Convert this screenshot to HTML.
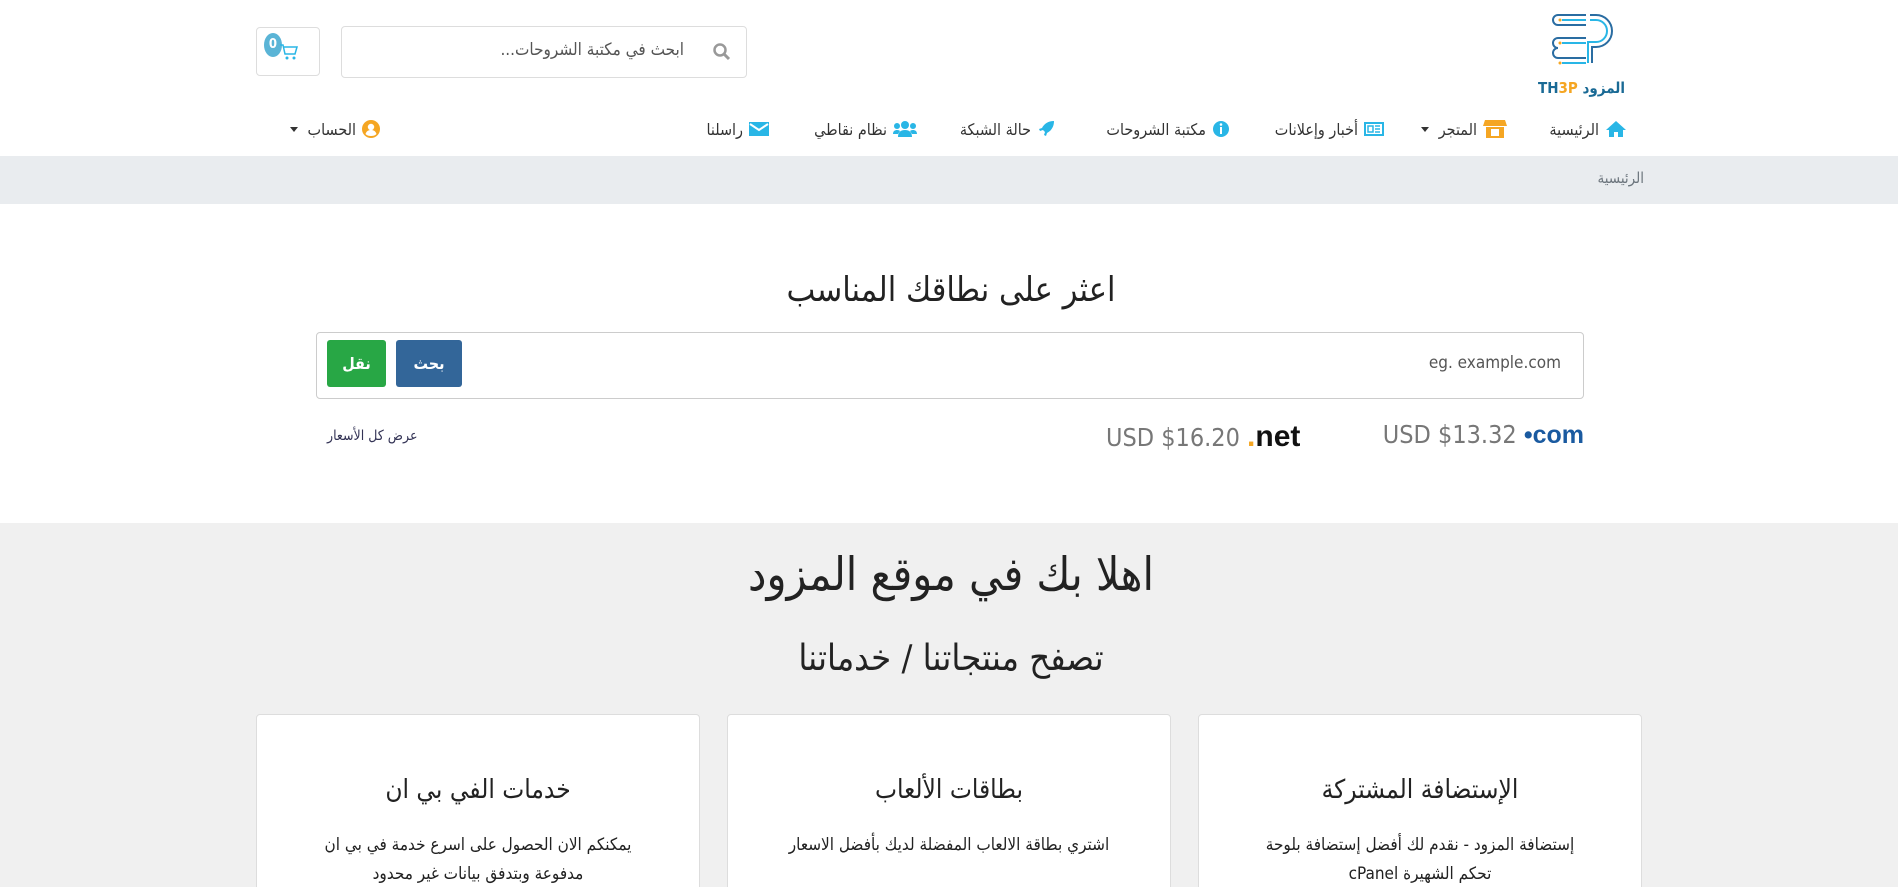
<!DOCTYPE html>
<html dir="rtl"><head><meta charset="utf-8"><style>
*{box-sizing:border-box;margin:0;padding:0}
html,body{width:1902px;height:887px;overflow:hidden}
body{background:#fff;font-family:"DejaVu Sans Condensed","DejaVu Sans",sans-serif;color:#333;position:relative}
.a{position:absolute}
.nav{top:116px;height:26px;font-size:16px;color:#333;display:flex;align-items:center;gap:6px;white-space:nowrap}
.caret{display:inline-block;border-left:4px solid transparent;border-right:4px solid transparent;border-top:5px solid #333;margin-right:4px}
.card{background:#fff;border:1px solid #ddd;border-radius:4px;top:714px;height:190px;width:444px;text-align:center;overflow:hidden}
.card h3{font-weight:normal;font-size:26px;margin-top:60px;color:#222}
.card p{font-size:17px;line-height:29px;margin:26px 60px 0;color:#222}
</style></head><body>
<div class="a" style="left:1546px;top:12px;width:80px;height:80px">
<svg width="80" height="60" viewBox="0 0 80 60" fill="none" stroke-width="2">
<path d="M40 3H12a5 5 0 0 0 0 10h28M40 26H12a5 5 0 0 0 0 10M12 36a5 5 0 0 0 0 10h28" stroke="#2a6da2"/>
<path d="M40 8H16M40 31H16M40 51H16" stroke="#29b6e6"/>
<path d="M44 3h6a16 16 0 0 1 0 32H46v16" stroke="#2a6da2"/>
<path d="M44 8h6a11 11 0 0 1 0 22H42v21" stroke="#29b6e6"/>
<circle cx="14" cy="8" r="1.5" fill="#f5a623" stroke="none"/><circle cx="14" cy="31" r="1.5" fill="#f5a623" stroke="none"/><circle cx="14" cy="51" r="1.5" fill="#f5a623" stroke="none"/>
</svg>
<div style="direction:ltr;font-size:15px;font-weight:bold;white-space:nowrap;margin-top:3px;margin-left:-8px"><span style="color:#1a6a95">TH</span><span style="color:#f5a623">3P</span> <span style="color:#1a6a95">المزود</span></div>
</div>
<div class="a" style="left:341px;top:26px;width:406px;height:52px;border:1px solid #ddd;border-radius:4px">
<svg class="a" style="right:14px;top:15px" width="20" height="20" viewBox="0 0 20 20"><circle cx="8" cy="8" r="5.5" stroke="#999" stroke-width="2.5" fill="none"/><path d="M12 12l5 5" stroke="#999" stroke-width="3"/></svg>
<div class="a" style="right:62px;top:13px;font-size:17px;color:#555">ابحث في مكتبة الشروحات...</div>
</div>
<div class="a" style="left:256px;top:27px;width:64px;height:49px;border:1px solid #ddd;border-radius:4px">
<div class="a" style="left:7px;top:5px;width:18px;height:24px;border-radius:50%;background:#5ab4d6;color:#fff;font-size:13px;font-weight:bold;text-align:center;line-height:24px">0</div>
<svg class="a" style="left:22px;top:15px" width="20" height="18" viewBox="0 0 20 18"><path d="M1 2h3l2 9h10l2-7H5" stroke="#29b6e6" stroke-width="1.5" fill="none"/><circle cx="8" cy="15" r="1.5" fill="#29b6e6"/><circle cx="15" cy="15" r="1.5" fill="#29b6e6"/></svg>
</div>
<div class="a nav" style="right:275px"><svg width="22" height="18" viewBox="0 0 22 18"><path d="M11 1L1 10h3v7h5v-5h4v5h5v-7h3z" fill="#29b6e6"/></svg><span>الرئيسية</span></div>
<div class="a nav" style="right:395px"><svg width="24" height="20" viewBox="0 0 24 20"><path d="M2 1h20l2 6H0z" fill="#f5a623"/><path d="M3 8h18v11H3z" fill="#f5a623"/><rect x="8" y="10" width="8" height="7" fill="#fff"/></svg><span>المتجر</span><span class="caret"></span></div>
<div class="a nav" style="right:518px"><svg width="20" height="14" viewBox="0 0 20 14"><rect x="1" y="1" width="18" height="12" fill="none" stroke="#29b6e6" stroke-width="2"/><path d="M4 4h5v6H4zM11 4h5M11 7h5M11 10h5" stroke="#29b6e6" stroke-width="1.5" fill="none"/></svg><span>أخبار وإعلانات</span></div>
<div class="a nav" style="right:672px"><svg width="18" height="18" viewBox="0 0 18 18"><circle cx="9" cy="9" r="8" fill="#29b6e6"/><rect x="8" y="7" width="2" height="7" fill="#fff"/><circle cx="9" cy="4.5" r="1.3" fill="#fff"/></svg><span>مكتبة الشروحات</span></div>
<div class="a nav" style="right:847px"><svg width="18" height="18" viewBox="0 0 18 18"><path d="M17 1C11 1 7 4 5 8L2 9l1 2 3-1 2 2-1 3 2 1 1-3c4-2 7-6 7-12z" fill="#29b6e6"/></svg><span>حالة الشبكة</span></div>
<div class="a nav" style="right:985px"><svg width="24" height="18" viewBox="0 0 24 18"><circle cx="12" cy="5" r="4" fill="#29b6e6"/><circle cx="4" cy="6" r="3" fill="#29b6e6"/><circle cx="20" cy="6" r="3" fill="#29b6e6"/><path d="M5 17c0-5 3-7 7-7s7 2 7 7zM0 14c0-3 2-4 4-4s3 1 3 1l-2 3zM24 14c0-3-2-4-4-4s-3 1-3 1l2 3z" fill="#29b6e6"/></svg><span>نظام نقاطي</span></div>
<div class="a nav" style="right:1133px"><svg width="20" height="16" viewBox="0 0 20 16"><rect x="0" y="1" width="20" height="14" fill="#29b6e6"/><path d="M1 3l9 6 9-6" stroke="#fff" stroke-width="2" fill="none"/></svg><span>راسلنا</span></div>
<div class="a nav" style="right:1522px"><svg width="18" height="18" viewBox="0 0 18 18"><circle cx="9" cy="9" r="9" fill="#f5a623"/><circle cx="9" cy="7" r="3.2" fill="#fff"/><path d="M3.5 14c1-3 3-4 5.5-4s4.5 1 5.5 4c-1.5 1.5-3.5 2-5.5 2s-4-.5-5.5-2z" fill="#fff"/></svg><span>الحساب</span><span class="caret"></span></div>
<div class="a" style="left:0;top:156px;width:1898px;height:48px;background:#e9ecef"></div>
<div class="a" style="right:258px;top:169px;font-size:15px;color:#6c757d">الرئيسية</div>
<div class="a" style="left:1898px;top:0;width:4px;height:887px;background:#fff"></div>
<div class="a" style="left:0;width:1902px;top:270px;text-align:center;font-size:34px;color:#222">اعثر على نطاقك المناسب</div>
<div class="a" style="left:316px;top:332px;width:1268px;height:67px;border:1px solid #ccc;border-radius:4px">
<div class="a" style="right:22px;top:20px;font-size:17px;color:#555;direction:ltr">eg. example.com</div>
<div class="a" style="left:79px;top:7px;width:66px;height:47px;background:#336699;border-radius:3px;color:#fff;font-size:16px;font-weight:bold;text-align:center;line-height:47px">بحث</div>
<div class="a" style="left:10px;top:7px;width:59px;height:47px;background:#28a745;border-radius:3px;color:#fff;font-size:16px;font-weight:bold;text-align:center;line-height:47px">نقل</div>
</div>
<div class="a" style="left:1362px;top:420px;direction:ltr;white-space:nowrap;font-size:25px;color:#777;width:222px;text-align:right"><span>USD $13.32</span> <span style="color:#1a5aa0;font-weight:bold;font-family:'Liberation Sans',sans-serif">•com</span></div>
<div class="a" style="left:1106px;top:420px;direction:ltr;white-space:nowrap;font-size:25px;color:#777"><span>USD $16.20</span> <span style="color:#111;font-weight:bold;font-family:'Liberation Sans',sans-serif;font-size:30px"><span style="color:#f5a623">.</span>net</span></div>
<div class="a" style="left:327px;top:428px;font-size:14px;color:#335">عرض كل الأسعار</div>
<div class="a" style="left:0;top:523px;width:1898px;height:364px;background:#f0f0f0"></div>
<div class="a" style="left:0;width:1902px;top:547px;text-align:center;font-size:46px;color:#222">اهلا بك في موقع المزود</div>
<div class="a" style="left:0;width:1902px;top:638px;text-align:center;font-size:36px;color:#222">تصفح منتجاتنا / خدماتنا</div>
<div class="a card" style="left:1198px"><h3>الإستضافة المشتركة</h3><p>إستضافة المزود - نقدم لك أفضل إستضافة بلوحة تحكم الشهيرة cPanel</p></div>
<div class="a card" style="left:727px"><h3>بطاقات الألعاب</h3><p>اشتري بطاقة الالعاب المفضلة لديك بأفضل الاسعار</p></div>
<div class="a card" style="left:256px"><h3>خدمات الفي بي ان</h3><p>يمكنكم الان الحصول على اسرع خدمة في بي ان مدفوعة وبتدفق بيانات غير محدود</p></div>
</body></html>
